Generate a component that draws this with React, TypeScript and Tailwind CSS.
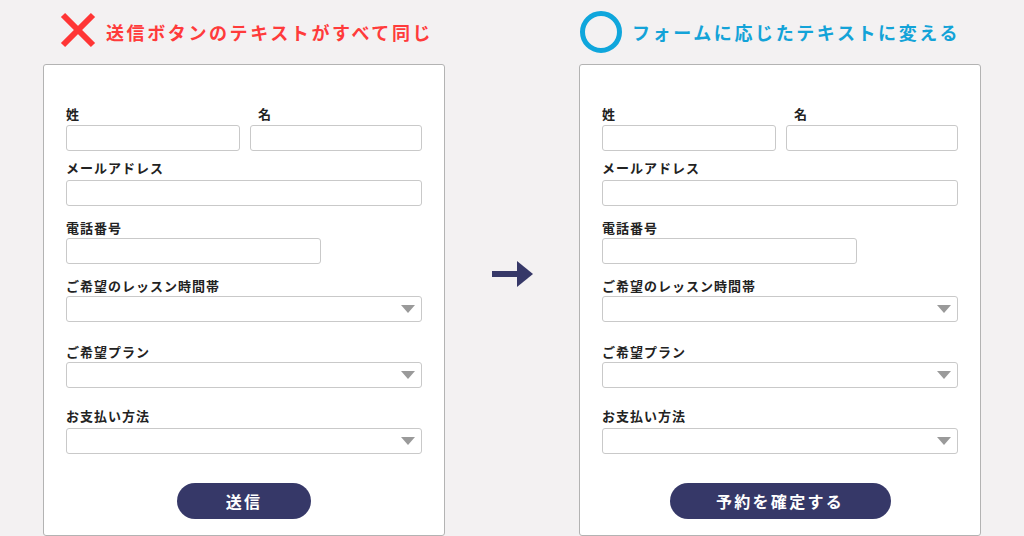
import React from "react";

const font = { fontFamily: '"Noto Sans CJK JP", "Noto Sans", sans-serif' };

function Input({ w }: { w: string }) {
  return <div className={`${w} h-[26px] border border-[#c9c9c9] rounded-[3px] bg-white`} />;
}

function Select() {
  return (
    <div className="w-full h-[26px] border border-[#c9c9c9] rounded-[3px] bg-white flex items-center justify-end pr-[6px]">
      <svg width="14" height="8" viewBox="0 0 14 8">
        <polygon points="0,0 14,0 7,8" fill="#9a9a9a" />
      </svg>
    </div>
  );
}

function Label({ children, cls = "" }: { children: React.ReactNode; cls?: string }) {
  return (
    <div className={`text-[13px] leading-[16px] font-bold text-[#222] tracking-[1px] ${cls}`}>{children}</div>
  );
}

function Card({ button, btnW }: { button: string; btnW: string }) {
  return (
    <div className="w-[402px] h-[480px] bg-white border border-[#b3b3b3] rounded-[3px] pt-[41px] pl-[22px] pr-[22px]">
      <div className="flex gap-[10px]">
        <div className="w-[174px]">
          <Label>姓</Label>
          <div className="mt-[3px]">
            <Input w="w-full" />
          </div>
        </div>
        <div className="flex-1">
          <Label cls="pl-[8px]">名</Label>
          <div className="mt-[3px]">
            <Input w="w-full" />
          </div>
        </div>
      </div>
      <Label cls="mt-[9px]">メールアドレス</Label>
      <div className="mt-[4px]">
        <Input w="w-full" />
      </div>
      <Label cls="mt-[14px]">電話番号</Label>
      <div className="mt-[2px]">
        <Input w="w-[255px]" />
      </div>
      <Label cls="mt-[14px]">ご希望のレッスン時間帯</Label>
      <div className="mt-[2px]">
        <Select />
      </div>
      <Label cls="mt-[22px]">ご希望プラン</Label>
      <div className="mt-[2px]">
        <Select />
      </div>
      <Label cls="mt-[20px]">お支払い方法</Label>
      <div className="mt-[4px]">
        <Select />
      </div>
      <div className="flex justify-center mt-[29px]">
        <div
          className={`${btnW} h-[36px] rounded-full bg-[#363868] text-white font-bold text-[16px] tracking-[2.3px] flex items-center justify-center`}
        >
          {button}
        </div>
      </div>
    </div>
  );
}

export default function App() {
  return (
    <div className="w-[1024px] h-[536px] bg-[#f3f1f2] overflow-hidden flex pl-[43px]" style={font}>
      <div className="w-[402px] flex flex-col">
        <div className="h-[65px] flex items-center">
          <svg width="36" height="36" viewBox="0 0 36 36" className="ml-[17px] mt-[-3px]">
            <line x1="3" y1="3" x2="33" y2="33" stroke="#ff3535" strokeWidth="6" />
            <line x1="33" y1="3" x2="3" y2="33" stroke="#ff3535" strokeWidth="6" />
          </svg>
          <div className="ml-[10px] mt-[0px] text-[18px] font-bold text-[#ff3b3b] tracking-[2.6px] leading-none">
            送信ボタンのテキストがすべて同じ
          </div>
        </div>
        <Card button="送信" btnW="w-[134px]" />
      </div>
      <div className="w-[134px] relative">
        <svg width="42" height="26" viewBox="0 0 42 26" className="absolute left-[47px] top-[261px]">
          <rect x="0" y="10" width="28" height="6" fill="#363868" />
          <polygon points="25,0 41,13 25,26" fill="#363868" />
        </svg>
      </div>
      <div className="w-[402px] flex flex-col">
        <div className="h-[65px] flex items-center">
          <svg width="44" height="44" viewBox="0 0 44 44" className="ml-[0px] mt-[1px]">
            <circle cx="22" cy="22" r="18.5" fill="none" stroke="#0fa6dc" strokeWidth="5" />
          </svg>
          <div className="ml-[9px] mt-[0px] text-[18px] font-bold text-[#13a3d8] tracking-[2.6px] leading-none">
            フォームに応じたテキストに変える
          </div>
        </div>
        <Card button="予約を確定する" btnW="w-[221px]" />
      </div>
    </div>
  );
}
